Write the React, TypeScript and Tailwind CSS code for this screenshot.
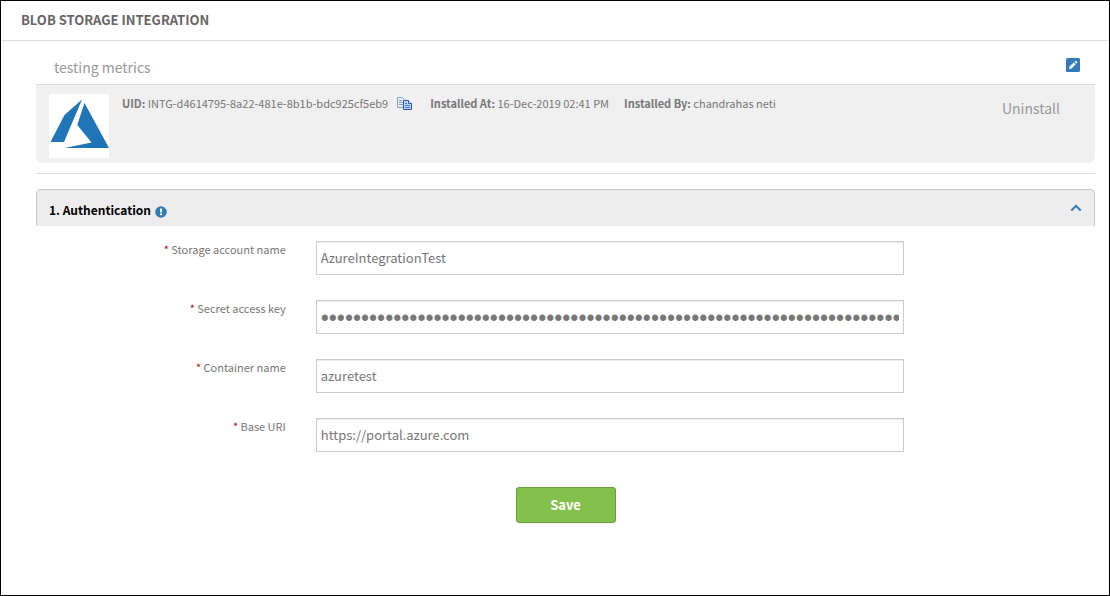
import { useState } from "react";

type Field = {
  id: string;
  label: string;
  type: "text" | "password";
  value: string;
};

const FIELDS: Field[] = [
  { id: "account", label: "Storage account name", type: "text", value: "AzureIntegrationTest" },
  { id: "secret", label: "Secret access key", type: "password", value: "x".repeat(88) },
  { id: "container", label: "Container name", type: "text", value: "azuretest" },
  { id: "uri", label: "Base URI", type: "text", value: "https://portal.azure.com" },
];

// The masked value is set in a face whose bullets are large and closely spaced.
const INPUT_TEXT = {
  text: "pb-0.5 text-[13px]",
  password: "pt-0.5 font-['Liberation_Sans',sans-serif] text-[23px]",
};

function AzureLogo() {
  return (
    <svg viewBox="0 0 60 64" className="h-16 w-[60px] shrink-0 bg-white" role="img" aria-label="Azure">
      <path fill="#2074b8" d="M33 5.5 L15.5 21 L1.5 48 L15 48 Z" />
      <path fill="#2074b8" d="M35.5 9 L60 54 L15.5 54 L42.5 48.5 L28.3 31 Z" />
    </svg>
  );
}

function CopyIcon() {
  return (
    <svg viewBox="0 0 16 16" className="size-4">
      <path d="M.5 2.5h5l2 2v8h-7z" fill="#e6eefa" stroke="#8fa3c6" />
      <path d="M2 5.5h3M2 7.5h4M2 9.5h4" stroke="#7fa3dc" />
      <path d="M6.5 5.5h5l3 3v6h-8z" fill="#bcd3f5" stroke="#2f57a6" />
      <path d="M11.5 5.5v3h3" fill="#fff" stroke="#2f57a6" />
      <path d="M8 8.5h2M8 10.5h5M8 12.5h5" stroke="#4a7ccb" />
    </svg>
  );
}

function EditIcon() {
  return (
    <svg viewBox="0 0 14 14" className="size-3.5">
      <rect width="14" height="14" rx="1.5" fill="#337ab7" />
      <path d="M3 11l.6-2.6 4.2-4.2 2 2-4.2 4.2z" fill="#fff" />
      <path d="M8.5 3.5l.8-.7q.4-.3.8 0l1.1 1.1q.3.4 0 .8l-.7.8z" fill="#fff" />
    </svg>
  );
}

function InfoIcon() {
  return (
    <svg viewBox="0 0 12 12" className="size-3">
      <circle cx="6" cy="6" r="5.8" fill="#337ab7" />
      <path d="M4.9 2.4h2.2l-.3 4H5.2z" fill="#fff" />
      <rect x="5" y="7.4" width="2" height="1.8" fill="#fff" />
    </svg>
  );
}

export default function App() {
  const [open, setOpen] = useState(true);

  return (
    <div className="min-h-screen border border-black bg-white font-['Noto_Sans_CJK_SC',sans-serif] text-[#777]">
      <header className="border-b border-[#ddd] px-5 pt-[9px] pb-2.5">
        <h1 className="text-[13px] leading-5 font-bold text-[#666]">BLOB STORAGE INTEGRATION</h1>
      </header>

      <main className="pr-3.5 pl-[35px]">
        <div className="flex h-[43px] items-start justify-between pt-4 pr-[15px] pl-[18px]">
          <h2 className="text-[14px] leading-5 text-[#999]">testing metrics</h2>
          <button type="button" aria-label="Edit name" className="pt-px">
            <EditIcon />
          </button>
        </div>

        <section className="flex items-start rounded-b-md border-t border-[#ddd] bg-[#f0f0f0] pt-[9px] pr-[35px] pb-[5px] pl-[13px]">
          <AzureLogo />
          <div className="flex grow items-center pl-[13px] text-[11px] leading-[18px]">
            <span><b>UID:</b> INTG-d4614795-8a22-481e-8b1b-bdc925cf5eb9</span>
            <button type="button" aria-label="Copy UID" className="mr-[17px] ml-[9px]">
              <CopyIcon />
            </button>
            <span><b>Installed At:</b> 16-Dec-2019 02:41 PM</span>
            <span className="pl-[15px]"><b>Installed By:</b> chandrahas neti</span>
          </div>
          <button type="button" className="mt-1 text-[14px] leading-5 text-[#999]">Uninstall</button>
        </section>

        <hr className="mt-2.5 border-[#ddd]" />

        <section className="mt-[15px]">
          <h3 className="rounded-t-[5px] border border-b-0 border-[#c8c8c8] bg-[#ededed]">
            <button
              type="button"
              aria-expanded={open}
              onClick={() => setOpen(!open)}
              className="flex h-9 w-full items-center justify-between px-3"
            >
              <span className="flex items-end gap-1 pt-1 text-[12px] leading-[18px] font-bold text-black">
                1. Authentication
                <span className="pb-px">
                  <InfoIcon />
                </span>
              </span>
              <svg viewBox="0 0 12 8" className="h-2 w-3" fill="none" stroke="#337ab7" strokeWidth="2">
                <path d="M1.3 6.5L6 1.8l4.7 4.7" />
              </svg>
            </button>
          </h3>

          {open && (
            <form className="pt-[15px]" onSubmit={(e) => e.preventDefault()}>
              {FIELDS.map((f) => (
                <div key={f.id} className="mb-[25px] grid grid-cols-12">
                  <label htmlFor={f.id} className="col-span-3 px-[15px] text-right text-[11px] leading-4">
                    <span className="text-[#c00]">*</span> {f.label}
                  </label>
                  <div className="col-span-7 px-[15px]">
                    <input
                      id={f.id}
                      type={f.type}
                      defaultValue={f.value}
                      className={`block h-[34px] w-full border border-[#ccc] px-1 shadow-[inset_0_1px_1px_rgba(0,0,0,0.08)] ${INPUT_TEXT[f.type]}`}
                    />
                  </div>
                </div>
              ))}
              <div className="flex justify-center pt-2.5">
                <button
                  type="submit"
                  className="h-9 w-[100px] rounded-[3px] border border-[#6a9e3b] bg-[#84c04c] text-[13px] font-bold text-white"
                >
                  Save
                </button>
              </div>
            </form>
          )}
        </section>
      </main>
    </div>
  );
}
